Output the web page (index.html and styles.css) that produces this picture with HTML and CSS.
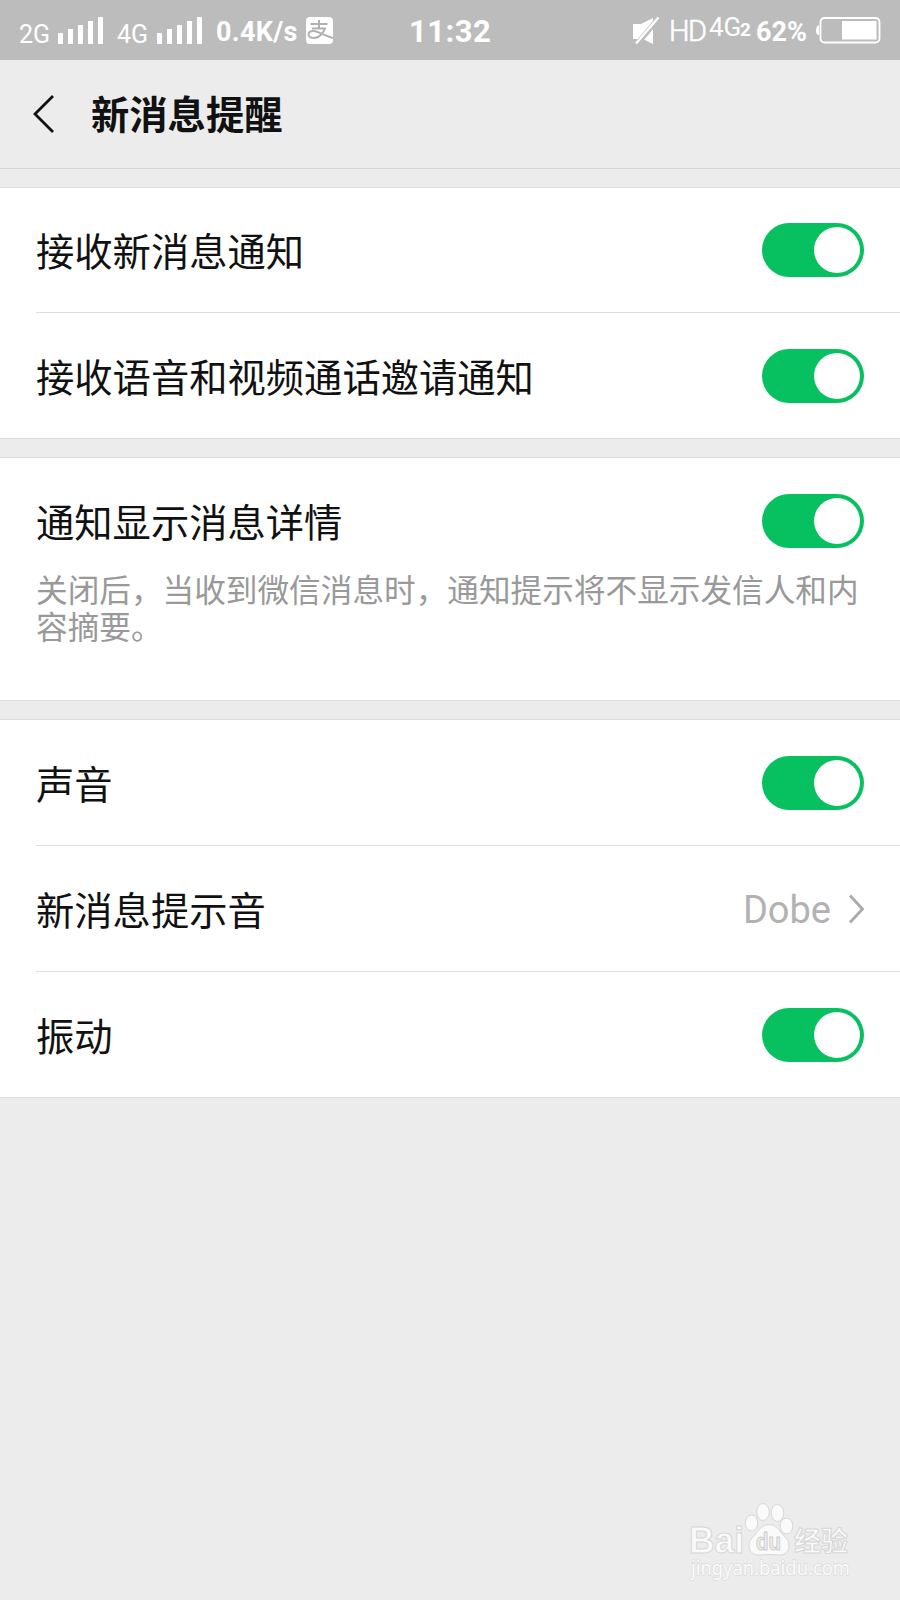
FILE: index.html
```html
<!DOCTYPE html>
<html lang="zh-CN">
<head>
  <meta charset="UTF-8" />
  <meta name="viewport" content="width=device-width, initial-scale=1.0" />
  <title>新消息提醒</title>
  <link rel="stylesheet" href="styles.css">
</head>
<body>
  <!-- 状态栏 -->
  <div class="statusbar">
    <div class="status-left">
      <span class="net net-2g">2G</span>
      <svg class="signal" width="46" height="27" viewBox="0 0 46 27" fill="#fff">
        <path d="M0 16h5v11H0zM10 12h5v15h-5zM20 8h5v19h-5zM30 4h5v23h-5zM40 0h5v27h-5z" />
      </svg>
      <span class="net net-4g">4G</span>
      <svg class="signal" width="46" height="27" viewBox="0 0 46 27" fill="#fff">
        <path d="M0 16h5v11H0zM10 12h5v15h-5zM20 8h5v19h-5zM30 4h5v23h-5zM40 0h5v27h-5z" />
      </svg>
      <span class="speed">0.4K/s</span>
      <svg class="pay" width="27" height="27" viewBox="0 0 27 27">
        <rect width="27" height="27" rx="4" fill="#fff" />
        <path d="M4.500 7h17M13 3v8.500M6 11.500h13c-1.500 4-5.500 9.500-11 9.500-3.500 0-5.500-1.500-5.500-3.700 0-2.300 2.300-3.500 5-3.300 5 .4 10 4.300 19.500 7" fill="none" stroke="#b0b0b0" stroke-width="2" />
      </svg>
    </div>
    <span class="clock">11:32</span>
    <div class="status-right">
      <svg class="mute" width="28" height="28" viewBox="0 0 28 28">
        <path d="M0 7h8l12-6v26l-10-5H0z" fill="#fff" />
        <path d="M27 0L3 28" stroke="#bcbcbc" stroke-width="5.500" />
        <path d="M25.500 .5L3 26.500" stroke="#fff" stroke-width="2.400" />
      </svg>
      <span class="hd">HD</span>
      <span class="net-sup">4G</span>
      <span class="sim">2</span>
      <span class="percent">62%</span>
      <svg class="battery" width="65" height="27" viewBox="0 0 65 27">
        <path d="M3 8Q0 9 0 13.500T3 18z" fill="#fff" />
        <rect x="4.500" y="1" width="59" height="24.500" rx="4" fill="none" stroke="#fff" stroke-width="1.800" />
        <rect x="26" y="4" width="34.500" height="18.500" fill="#fff" />
      </svg>
    </div>
  </div>

  <div class="header">
    <svg class="back" width="22" height="38" viewBox="0 0 22 38">
      <path d="M20 1L2 19l18 18" fill="none" stroke="#111" stroke-width="2.800" />
    </svg>
    <h1 class="title">新消息提醒</h1>
  </div>

  <div class="group">
    <div class="row">
      <span class="label">接收新消息通知</span>
      <span class="switch"></span>
    </div>
    <div class="row">
      <span class="label">接收语音和视频通话邀请通知</span>
      <span class="switch"></span>
    </div>
  </div>

  <div class="group group-detail">
    <div class="row">
      <span class="label">通知显示消息详情</span>
      <span class="switch"></span>
    </div>
    <p class="desc">关闭后，当收到微信消息时，通知提示将不显示发信人和内容摘要。</p>
  </div>

  <div class="group group-sound">
    <div class="row">
      <span class="label">声音</span>
      <span class="switch"></span>
    </div>
    <div class="row">
      <span class="label">新消息提示音</span>
      <span class="value">Dobe</span>
      <svg class="arrow" width="16" height="30" viewBox="0 0 16 30">
        <path d="M2 1.500L14.500 15 2 28.500" fill="none" stroke="#aaa" stroke-width="2.800" />
      </svg>
    </div>
    <div class="row">
      <span class="label">振动</span>
      <span class="switch"></span>
    </div>
  </div>

  <!-- 水印 -->
  <svg class="watermark" width="180" height="90" viewBox="0 0 180 90">
    <g fill="#fafafa" stroke="#d6d6d6" stroke-width="1">
      <text class="wm-logo" x="4" y="53" textLength="55" lengthAdjust="spacingAndGlyphs">Bai</text>
      <ellipse cx="66.500" cy="23" rx="6.300" ry="8" />
      <ellipse cx="78" cy="12" rx="6.300" ry="8.500" />
      <ellipse cx="92.500" cy="13" rx="6.300" ry="8.500" />
      <ellipse cx="101.500" cy="26" rx="6.300" ry="8" />
      <path d="M84 24.500c-6 0-9 4-12 8-4 5-8 7-8 13 0 6 4 9.500 9 9.500 4 0 7-.5 11-.5s7 .5 11 .5c5 0 9-3.500 9-9.500 0-6-4-8-8-13-3-4-6-8-12-8z" />
      <text class="wm-cn" x="109" y="51">经验</text>
    </g>
    <text class="wm-du" x="71" y="50" textLength="25" lengthAdjust="spacingAndGlyphs">du</text>
    <text class="wm-url" x="6" y="75" textLength="159" lengthAdjust="spacingAndGlyphs">jingyan.baidu.com</text>
  </svg>
</body>
</html>
```
FILE: styles.css
```css
* {
  box-sizing: border-box;
}

body {
  font-family: Roboto, "Noto Sans CJK SC", sans-serif;
  margin: 0;
  height: 1600px;
  background: #ececec;
  color: #111;
  position: relative;
  overflow: hidden;
}

.statusbar {
  height: 60px;
  background: #bcbcbc;
  color: #fff;
  display: flex;
  align-items: flex-start;
  line-height: 30px;
  white-space: nowrap;
}

.status-left,
.status-right {
  display: flex;
  align-items: flex-start;
}

.status-left {
  width: 409px;
  padding-left: 19px;
}

.net {
  font-size: 25px;
  width: 39px;
  padding-top: 20px;
}

.net-4g {
  width: 41px;
  padding-left: 1px;
}

.signal {
  margin: 17px 12px 0 0;
}

.speed {
  width: 91px;
  padding: 17px 0 0 1px;
  font-size: 27px;
  font-weight: bold;
  letter-spacing: 0.3px;
}

.pay {
  margin-top: 17px;
}

.clock {
  width: 224px;
  padding-top: 17px;
  font-size: 31px;
  font-weight: bold;
  letter-spacing: 0.5px;
}

.mute {
  width: 28px;
  margin-top: 17px;
}

.hd {
  width: 40px;
  margin-left: 8px;
  padding-top: 16px;
  font-size: 29px;
  font-weight: 300;
  letter-spacing: -1.5px;
  -webkit-text-stroke: 0.6px #fff;
}

.net-sup {
  width: 31px;
  padding-top: 12px;
  font-size: 26px;
}

.sim {
  width: 16px;
  padding-top: 15px;
  font-size: 19px;
  font-weight: bold;
}

.percent {
  width: 60px;
  padding-top: 17px;
  font-size: 27px;
  font-weight: bold;
}

.battery {
  margin-top: 17px;
}

.header {
  height: 109px;
  padding-left: 33px;
  border-bottom: 1px solid #d5d5d5;
  display: flex;
  align-items: center;
}

.title {
  margin: 0 0 0 36px;
  padding-top: 4px;
  font-size: 38.3px;
  line-height: 56px;
  font-weight: 700;
}

.group {
  margin-top: 18px;
  background: #fff;
  border-top: 1px solid #dcdcdc;
  border-bottom: 1px solid #dcdcdc;
}

.row {
  height: 125px;
  margin-left: 36px;
  padding-right: 36px;
  border-bottom: 1px solid #dedede;
  display: flex;
  align-items: center;
}

.row:last-child {
  border-bottom: none;
}

.group-sound .row {
  height: 126px;
}

.group-sound .row:last-child {
  height: 125px;
}

.label {
  flex: 1;
  padding-top: 6px;
  font-size: 38.3px;
  line-height: 56px;
}

.switch {
  width: 102px;
  height: 54px;
  padding: 4px;
  border-radius: 27px;
  background: #07c160;
  display: flex;
  justify-content: flex-end;
}

.switch::before {
  content: "";
  width: 46px;
  height: 46px;
  border-radius: 50%;
  background: #fff;
}

.value {
  padding-top: 3px;
  font-size: 38px;
  color: #b2b2b2;
}

.arrow {
  margin-left: 17px;
}

.group-detail {
  height: 244px;
}

.group-detail .row {
  border-bottom: none;
}

.desc {
  margin: -10px 30px 0 36px;
  font-size: 31.65px;
  line-height: 37px;
  color: #999;
}

.watermark {
  position: absolute;
  left: 685px;
  top: 1500px;
}

.wm-logo {
  font: bold 36px "Liberation Sans", sans-serif;
}

.wm-du {
  font: bold 23px "Liberation Sans", sans-serif;
  fill: #ececec;
  stroke: #cecece;
  stroke-width: 1px;
}

.wm-cn {
  font: bold 27px "Noto Sans CJK SC", sans-serif;
}

.wm-url {
  font: 20px "Noto Sans", sans-serif;
  fill: #fafafa;
  stroke: #dadada;
  stroke-width: 1.4px;
  paint-order: stroke;
}
```
